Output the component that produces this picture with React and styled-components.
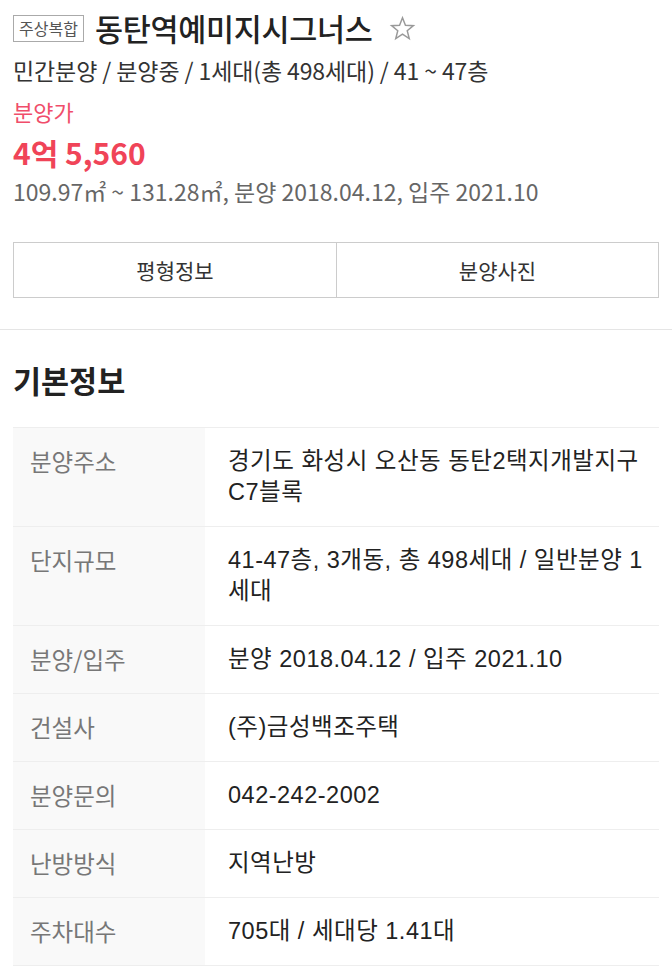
import styled, { createGlobalStyle } from 'styled-components'

const GlobalStyle = createGlobalStyle`
    body {
        margin: 0;
        background: #fff;
        font-family: "Noto Sans CJK KR", "Noto Sans", sans-serif;
        color: #222;
    }
`

const Page = styled.div`
    width: 672px;
`

const Header = styled.section`
    padding: 8px 13px 31px;
    border-bottom: 1px solid #e5e5e5;
`

const TitleRow = styled.div`
    display: flex;
    align-items: center;
    height: 40px;
`

const Badge = styled.span`
    border: 1px solid #aaa;
    color: #555;
    font-size: 16px;
    line-height: 25px;
    padding: 0 5px;
    margin-right: 11px;
`

const Title = styled.h1`
    margin: 0;
    font-size: 30.5px;
    font-weight: 500;
    color: #222;
    letter-spacing: -0.3px;
`

const Star = styled.svg`
    width: 27px;
    height: 27px;
    margin-left: 16px;
`

const Sub = styled.p`
    margin: 8px 0 0;
    font-size: 23px;
    line-height: 28px;
    color: #333;
    letter-spacing: -0.1px;
`

const PriceLabel = styled.p`
    margin: 14px 0 0;
    font-size: 22px;
    line-height: 26px;
    color: #f04d6a;
`

const Price = styled.p`
    margin: 10px 0 0;
    font-size: 30px;
    font-weight: 700;
    line-height: 36px;
    color: #f04458;
`

const Area = styled.p`
    margin: 6px 0 0;
    font-size: 23px;
    line-height: 30px;
    color: #666;
`

const Tabs = styled.div`
    display: grid;
    grid-template-columns: 1fr 1fr;
    margin-top: 36px;
    border: 1px solid #ccc;
`

const Tab = styled.button`
    height: 54px;
    border: none;
    border-left: ${(p) => (p.$first ? 'none' : '1px solid #ccc')};
    background: #fff;
    font-family: inherit;
    font-size: 21px;
    color: #333;
`

const Info = styled.section`
    padding: 30px 13px 0;
`

const InfoTitle = styled.h2`
    margin: 0 0 27px;
    font-size: 30.5px;
    font-weight: 700;
    color: #222;
    line-height: 40px;
`

const Table = styled.div`
    border-top: 1px solid #eee;
`

const Row = styled.div`
    display: grid;
    grid-template-columns: 192px 1fr;
    border-bottom: 1px solid #eee;
`

const Label = styled.div`
    background: #f9f9f9;
    padding: 18px 17px;
    font-size: 23.5px;
    line-height: 31px;
    color: #777;
`

const Value = styled.div`
    padding: 18px 4px 18px 23px;
    font-family: "Liberation Sans", "Noto Sans CJK KR", sans-serif;
    font-size: 23.5px;
    line-height: 31px;
    letter-spacing: 0.5px;
    color: #222;
`

const rows = [
    ['분양주소', '경기도 화성시 오산동 동탄2택지개발지구 C7블록'],
    ['단지규모', '41-47층, 3개동, 총 498세대 / 일반분양 1세대'],
    ['분양/입주', '분양 2018.04.12 / 입주 2021.10'],
    ['건설사', '(주)금성백조주택'],
    ['분양문의', '042-242-2002'],
    ['난방방식', '지역난방'],
    ['주차대수', '705대 / 세대당 1.41대'],
]

export default function App() {
    return (
        <Page>
            <GlobalStyle />
            <Header>
                <TitleRow>
                    <Badge>주상복합</Badge>
                    <Title>동탄역예미지시그너스</Title>
                    <Star viewBox="0 0 24 24" fill="none" stroke="#999" strokeWidth="1.3" strokeLinejoin="miter">
                        <path d="M12 2.5l2.6 6.6 7.1.4-5.5 4.5 1.8 6.9L12 17l-6 3.9 1.8-6.9-5.5-4.5 7.1-.4z" />
                    </Star>
                </TitleRow>
                <Sub>민간분양 / 분양중 / 1세대(총 498세대) / 41 ~ 47층</Sub>
                <PriceLabel>분양가</PriceLabel>
                <Price>4억 5,560</Price>
                <Area>109.97㎡ ~ 131.28㎡, 분양 2018.04.12, 입주 2021.10</Area>
                <Tabs>
                    <Tab $first>평형정보</Tab>
                    <Tab>분양사진</Tab>
                </Tabs>
            </Header>
            <Info>
                <InfoTitle>기본정보</InfoTitle>
                <Table>
                    {rows.map(([k, v]) => (
                        <Row key={k}>
                            <Label>{k}</Label>
                            <Value>{v}</Value>
                        </Row>
                    ))}
                </Table>
            </Info>
        </Page>
    )
}
